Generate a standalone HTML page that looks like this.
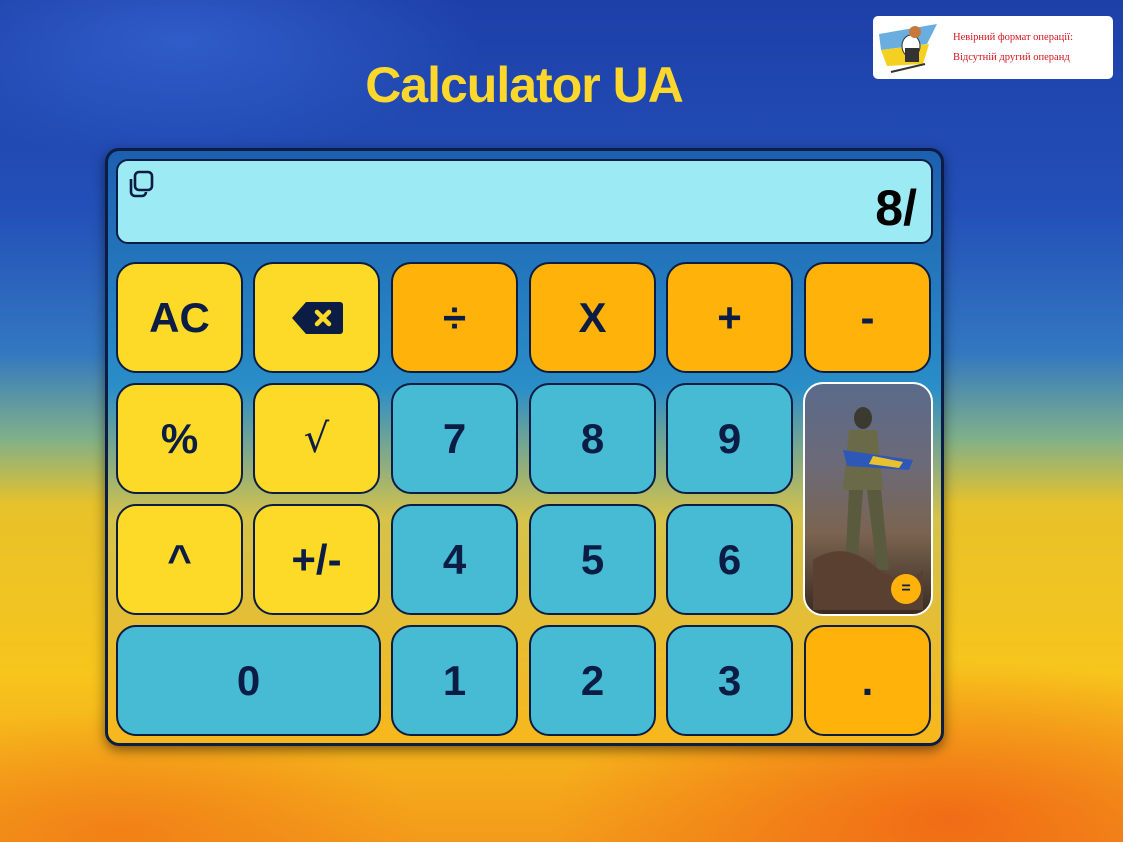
<!DOCTYPE html>
<html><head><meta charset="utf-8"><style>
*{box-sizing:border-box;margin:0;padding:0}
html,body{width:1123px;height:842px;overflow:hidden}
body{position:relative;font-family:"Liberation Sans",sans-serif;
background:
radial-gradient(ellipse 300px 120px at 180px 40px,rgba(60,110,220,.6),transparent),
radial-gradient(ellipse 400px 160px at 950px 820px,rgba(240,90,20,.75),transparent),
radial-gradient(ellipse 300px 120px at 120px 830px,rgba(240,110,20,.6),transparent),
linear-gradient(180deg,#1d3fa8 0%,#2350b8 25%,#3378c0 42%,#7fb08a 52%,#e8c22a 60%,#f7c51c 80%,#f39a1a 100%);}
h1{position:absolute;left:0;width:1048px;top:56px;text-align:center;color:#fdd72b;font-size:50px;font-weight:bold;letter-spacing:-1px}
.toast{position:absolute;left:873px;top:16px;width:240px;height:63px;background:#fff;border-radius:5px}
.toast .t{position:absolute;left:80px;font-family:"Liberation Serif",serif;font-size:10.5px;color:#d3141e}
.calc{position:absolute;left:105px;top:148px;width:839px;height:598px;border:3px solid #0b1d44;border-radius:14px;
background:linear-gradient(180deg,#1d5fb0 0%,#2a8ec8 40%,#d5c34a 62%,#f7b81c 100%);box-shadow:0 4px 12px rgba(0,0,0,.5)}
.disp{position:absolute;left:116px;top:159px;width:817px;height:85px;background:#9ceaf4;border:2px solid #0b1d44;border-radius:12px}
.disp .v{position:absolute;right:14px;top:18px;font-size:50px;font-weight:bold;color:#000}
.b{position:absolute;width:127px;height:111px;border:2px solid #0b1d44;border-radius:20px;display:flex;align-items:center;justify-content:center;font-size:42px;font-weight:bold;color:#0b1d44}
.y{background:#fdd928}.o{background:#ffb30a}.c{background:#47bbd3}
</style></head><body>
<h1>Calculator UA</h1>
<div class="toast">
<svg style="position:absolute;left:4px;top:4px" width="70" height="56" viewBox="0 0 70 56">
<path d="M2 14 L60 4 L50 24 L4 30Z" fill="#6aaee0"/><path d="M4 30 L52 24 L46 44 L10 46Z" fill="#f4d020"/>
<ellipse cx="34" cy="26" rx="9" ry="11" fill="#fff" stroke="#333"/><rect x="28" y="28" width="14" height="14" fill="#333"/>
<circle cx="38" cy="12" r="6" fill="#c8783a"/><path d="M14 52 L48 44" stroke="#333" stroke-width="2"/></svg>
<div class="t" style="top:16px">Невірний формат операції:</div>
<div class="t" style="top:36px">Відсутній другий операнд</div>
</div>
<div class="calc"></div>
<div class="disp">
<svg style="position:absolute;left:7px;top:8px" width="32" height="32" viewBox="0 0 32 32" fill="none" stroke="#0b1d44" stroke-width="2.6" stroke-linejoin="round">
<rect x="10" y="3" width="17" height="18" rx="4"/><path d="M6 10v13a4 4 0 0 0 4 4h7a4 4 0 0 0 4-4"/></svg>
<div class="v">8/</div></div>

<div class="b y" style="left:116px;top:262px">AC</div>
<div class="b y" style="left:253px;top:262px"><svg width="54" height="36" viewBox="0 0 54 36"><path d="M2 18 L16 2 H50 a3 3 0 0 1 3 3 V31 a3 3 0 0 1-3 3 H16Z" fill="#0b1d44"/><path d="M27 12 L39 24 M39 12 L27 24" stroke="#fdd928" stroke-width="4.5" stroke-linecap="round"/></svg></div>
<div class="b o" style="left:391px;top:262px">÷</div>
<div class="b o" style="left:529px;top:262px">X</div>
<div class="b o" style="left:666px;top:262px">+</div>
<div class="b o" style="left:804px;top:262px">-</div>

<div class="b y" style="left:116px;top:383px">%</div>
<div class="b y" style="left:253px;top:383px;font-weight:normal;font-family:'DejaVu Sans',sans-serif;font-size:40px">√</div>
<div class="b c" style="left:391px;top:383px">7</div>
<div class="b c" style="left:529px;top:383px">8</div>
<div class="b c" style="left:666px;top:383px">9</div>
<div class="b" style="left:803px;top:382px;width:130px;height:234px;border-color:#fff;background:linear-gradient(180deg,#5a6a8a 0%,#6c6a78 35%,#7a6450 65%,#3a2a22 100%)">
<svg width="110" height="220" viewBox="0 0 110 220" style="position:absolute;left:8px;top:6px">
<ellipse cx="50" cy="28" rx="9" ry="11" fill="#3a3a30"/><path d="M36 40 h28 l6 60 h-40z" fill="#6a6a48"/>
<path d="M30 60 L100 70 L96 80 L34 76z" fill="#2e58b8"/><path d="M60 66 l30 6 l-4 6 l-30-4z" fill="#e8c030"/>
<path d="M36 100 h14 l-6 80 h-12z M54 100 h14 l8 80 h-12z" fill="#5a5a3e"/>
<path d="M0 170 Q30 150 60 175 T110 180 V220 H0z" fill="#5a4030"/></svg>
<div style="position:absolute;right:10px;bottom:10px;width:30px;height:30px;border-radius:50%;background:#ffb30a;font-size:16px;display:flex;align-items:center;justify-content:center">=</div></div>

<div class="b y" style="left:116px;top:504px">^</div>
<div class="b y" style="left:253px;top:504px">+/-</div>
<div class="b c" style="left:391px;top:504px">4</div>
<div class="b c" style="left:529px;top:504px">5</div>
<div class="b c" style="left:666px;top:504px">6</div>

<div class="b c" style="left:116px;top:625px;width:265px">0</div>
<div class="b c" style="left:391px;top:625px">1</div>
<div class="b c" style="left:529px;top:625px">2</div>
<div class="b c" style="left:666px;top:625px">3</div>
<div class="b o" style="left:804px;top:625px">.</div>
</body></html>
